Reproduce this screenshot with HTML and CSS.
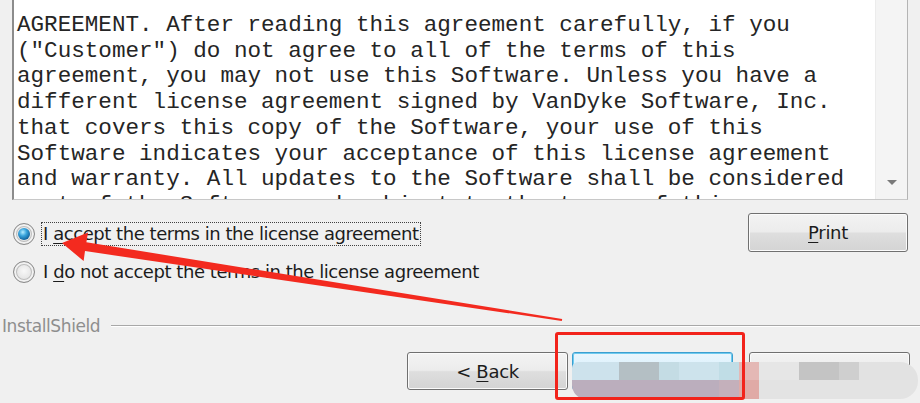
FILE: index.html
```
<!DOCTYPE html>
<html>
<head>
<meta charset="utf-8">
<link rel="stylesheet" href="styles.css">
</head>
<body>
<div class="dialog">
  <div class="license">
    <div class="license-text">AGREEMENT. After reading this agreement carefully, if you
("Customer") do not agree to all of the terms of this
agreement, you may not use this Software. Unless you have a
different license agreement signed by VanDyke Software, Inc.
that covers this copy of the Software, your use of this
Software indicates your acceptance of this license agreement
and warranty. All updates to the Software shall be considered
part of the Software and subject to the terms of this</div>
    <div class="scrollbar"><span class="arrow-down"></span></div>
  </div>

  <div class="options">
    <div class="radios">
      <label class="radio-row">
        <span class="radio checked"><span class="dot"></span></span>
        <span class="radio-label focused">I <u>a</u>ccept the terms in the license agreement</span>
      </label>
      <label class="radio-row">
        <span class="radio"></span>
        <span class="radio-label">I <u>d</u>o not accept the terms in the license agreement</span>
      </label>
    </div>
    <button class="btn print"><u>P</u>rint</button>
  </div>

  <div class="brand">
    <span class="brand-name">InstallShield</span>
    <span class="rule"></span>
  </div>

  <div class="actions">
    <button class="btn">&lt; <u>B</u>ack</button>
    <button class="btn default">Next &gt;</button>
    <button class="btn cancel">Cancel</button>
  </div>

  <div class="smear">
    <div class="smear-top"></div>
    <div class="smear-bottom"></div>
  </div>

  <div class="highlight-box"></div>

  <svg class="arrow" width="920" height="403" viewBox="0 0 920 403">
    <polygon points="62,243 88,232.5 86.4,242.3 562.2,319 561.8,321 85,251.1 83.6,261" fill="#f32a1f"/>
  </svg>
</div>
</body>
</html>
```
FILE: styles.css
```
* { box-sizing: border-box; }

html, body {
  margin: 0;
  padding: 0;
  background: #f0f0f0;
}

.dialog {
  position: relative;
  width: 920px;
  height: 403px;
  overflow: hidden;
  background: #f0f0f0;
  font-family: "DejaVu Sans", "Liberation Sans", sans-serif;
  color: #1e1e1e;
}

/* License text box */
.license {
  display: flex;
  margin-left: 12px;
  width: 896px;
  height: 200px;
  border-left: 2px solid #8c8c8c;
  border-right: 1px solid #b4b4b4;
  border-bottom: 1px solid #c8c8c8;
  background: #fff;
}

.license-text {
  flex: 1;
  padding: 13px 0 0 3px;
  font-family: "Liberation Mono", "Courier New", monospace;
  font-size: 22.6px;
  line-height: 25.7px;
  color: #252525;
  white-space: pre;
  overflow: hidden;
}

.scrollbar {
  width: 32px;
  background: #f4f4f4;
  border-left: 1px solid #ececec;
  display: flex;
  flex-direction: column;
  justify-content: flex-end;
  align-items: center;
  padding-bottom: 14px;
}

.arrow-down {
  width: 0;
  height: 0;
  border-left: 5px solid transparent;
  border-right: 5px solid transparent;
  border-top: 5px solid #7a7a7a;
}

/* Options */
.options {
  display: flex;
  justify-content: space-between;
  align-items: flex-start;
  height: 110px;
  padding: 13px 12px 0 13px;
}

.radios {
  display: flex;
  flex-direction: column;
  gap: 14px;
  padding-top: 9px;
}

.radio-row {
  display: flex;
  align-items: center;
  gap: 6px;
  height: 24px;
}

.radio {
  width: 22px;
  height: 22px;
  border-radius: 50%;
  border: 1px solid #8a8a8a;
  background: radial-gradient(circle at 50% 45%, #f8f8f8 0%, #e6e6e6 50%, #c8c8c8 100%);
  display: flex;
  align-items: center;
  justify-content: center;
  box-shadow: inset 0 0 0 2px #f2f2f2, inset 0 0 0 3px #bdbdbd;
}

.radio .dot {
  width: 12px;
  height: 12px;
  border-radius: 50%;
  background: radial-gradient(circle at 40% 35%, #b6ecff 0%, #39a4dc 35%, #0f5f99 75%, #0a3a66 100%);
}

.radio-label {
  font-size: 18px;
  letter-spacing: -0.45px;
  line-height: 22px;
  padding: 0 1px;
  border: 1px dotted transparent;
  color: #1c1c1c;
}

.radio-label.focused {
  border-color: #404040;
}

.radio-label u {
  text-underline-offset: 3px;
}

/* Buttons */
.btn {
  font-family: "DejaVu Sans", "Liberation Sans", sans-serif;
  font-size: 18px;
  letter-spacing: -0.3px;
  color: #1c1c1c;
  width: 161px;
  height: 38px;
  border: 1px solid #707070;
  border-radius: 3px;
  background: linear-gradient(#f3f3f3 0%, #ececec 48%, #dedede 52%, #d4d4d4 100%);
  box-shadow: inset 0 0 0 1px #fbfbfb;
  padding: 0;
}

.btn u {
  text-underline-offset: 3px;
}

.btn.print {
  width: 160px;
  height: 39px;
}

.btn.default {
  border-color: #3c9fd0;
  background: linear-gradient(#eaf6fd 0%, #d9f0fc 48%, #bee6fd 52%, #a7d9f5 100%);
  box-shadow: inset 0 0 0 1px #6fcbef;
}

/* Brand row */
.brand {
  display: flex;
  align-items: center;
  height: 32px;
  padding-left: 2px;
}

.brand-name {
  font-size: 17px;
  letter-spacing: -0.4px;
  color: #8e8e8e;
}

.rule {
  flex: 1;
  margin-left: 11px;
  border-top: 1px solid #a8a8a8;
  border-bottom: 1px solid #ffffff;
}

.actions {
  display: flex;
  justify-content: flex-end;
  gap: 4px;
  padding: 10px 10px 0 0;
}

.actions .cancel {
  margin-left: 12px;
}

/* Overlays (annotation marks on top of the screenshot) */
.smear {
  position: absolute;
  left: 572px;
  top: 362px;
  width: 346px;
  height: 37px;
  display: flex;
  flex-direction: column;
  border-radius: 6px 18px 18px 14px;
  overflow: hidden;
}

.smear-top {
  height: 18px;
  flex: none;
  background: linear-gradient(to right,
      #cde2ec 0px, #cde2ec 47px, #b4bfc4 47px, #b4bfc4 87px,
      #c4dce4 87px, #c4dce4 107px, #cde3ec 107px, #cde3ec 147px,
      #c0dde6 147px, #c0dde6 167px, #e4b8b5 167px, #e4b8b5 187px,
      #e6e6e6 187px, #e6e6e6 227px, #c4c4c4 227px, #c4c4c4 267px,
      #cfcfcf 267px, #cfcfcf 287px, #e2e2e2 287px, #e2e2e2 346px);
}

.smear-bottom {
  height: 19px;
  flex: none;
  background: linear-gradient(to right,
      #bbaebd 0px, #bbaebd 147px, #c4b0bb 147px, #c4b0bb 167px,
      #e0aaa6 167px, #e0aaa6 187px, #e3e3e3 187px, #e3e3e3 346px);
}

.highlight-box {
  position: absolute;
  left: 555px;
  top: 332px;
  width: 190px;
  height: 68px;
  border: 3px solid #f2231b;
  border-radius: 3px;
}

.arrow {
  position: absolute;
  left: 0;
  top: 0;
  pointer-events: none;
}
```
